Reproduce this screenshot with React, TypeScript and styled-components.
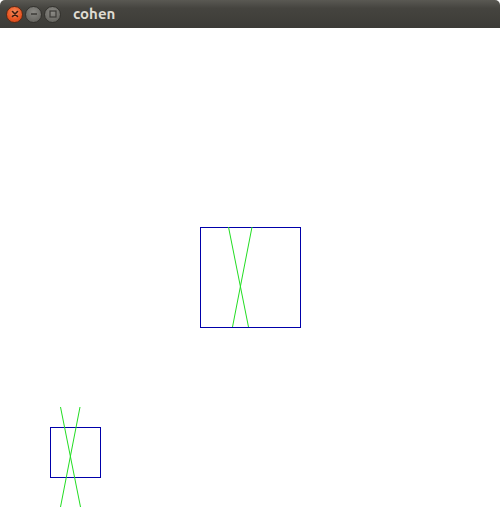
import React from "react";
import styled, { createGlobalStyle } from "styled-components";

const Global = createGlobalStyle`
  html, body { margin: 0; padding: 0; background: #ffffff; }
  body { font-family: "Ubuntu", "Noto Sans", "DejaVu Sans", sans-serif; }
`;

const Window = styled.div`
  width: 500px;
  height: 528px;
  display: flex;
  flex-direction: column;
  background: #ffffff;
  overflow: hidden;
`;

const TitleBar = styled.div`
  height: 28px;
  flex: 0 0 28px;
  display: flex;
  align-items: center;
  padding-left: 6px;
  gap: 2px;
  background: linear-gradient(#5a5953 0%, #45443f 30%, #3c3b37 100%);
  border-radius: 5px 5px 0 0;
  box-sizing: border-box;
`;

const Btn = styled.div<{ $close?: boolean }>`
  width: 17px;
  height: 17px;
  border-radius: 50%;
  box-sizing: border-box;
  display: flex;
  align-items: center;
  justify-content: center;
  border: 1px solid ${(p) => (p.$close ? "#5a2a16" : "#33322e")};
  background: ${(p) =>
    p.$close
      ? "radial-gradient(circle at 50% 35%, #f58d5e 0%, #e95420 60%, #c7431a 100%)"
      : "radial-gradient(circle at 50% 35%, #8b8a85 0%, #6f6e69 60%, #5d5c57 100%)"};
`;

const Title = styled.div`
  margin-left: 10px;
  color: #dfdbd2;
  font-family: "Ubuntu", "Noto Sans", "DejaVu Sans", sans-serif;
  font-weight: 700;
  font-size: 15px;
  line-height: 28px;
`;

const Canvas = styled.div`
  flex: 1;
  background: #ffffff;
`;

const Drawing = styled.svg`
  display: block;
`;

export default function App() {
  return (
    <>
      <Global />
      <Window>
        <TitleBar>
          <Btn $close>
            <svg width="8" height="8" viewBox="0 0 8 8">
              <path d="M1.5 1.5 L6.5 6.5 M6.5 1.5 L1.5 6.5" stroke="#3c1d10" strokeWidth="1.6" strokeLinecap="round" />
            </svg>
          </Btn>
          <Btn>
            <svg width="8" height="8" viewBox="0 0 8 8">
              <path d="M1 4 L7 4" stroke="#3c3b37" strokeWidth="1.5" />
            </svg>
          </Btn>
          <Btn>
            <svg width="8" height="8" viewBox="0 0 8 8">
              <rect x="1" y="1" width="6" height="6" fill="none" stroke="#3c3b37" strokeWidth="1.2" />
            </svg>
          </Btn>
          <Title>cohen</Title>
        </TitleBar>
        <Canvas>
          <Drawing width="500" height="500" viewBox="0 28 500 500">
            <rect x="200.5" y="227.5" width="100" height="100" fill="none" stroke="#0000aa" strokeWidth="1" />
            <line x1="228.5" y1="227" x2="248.5" y2="327" stroke="#22dd22" strokeWidth="1" />
            <line x1="252" y1="227" x2="232.5" y2="327" stroke="#22dd22" strokeWidth="1" />
            <rect x="50.5" y="427.5" width="50" height="50" fill="none" stroke="#0000aa" strokeWidth="1" />
            <line x1="60.5" y1="407" x2="80.5" y2="507" stroke="#22dd22" strokeWidth="1" />
            <line x1="80" y1="407" x2="60.5" y2="507" stroke="#22dd22" strokeWidth="1" />
          </Drawing>
        </Canvas>
      </Window>
    </>
  );
}
